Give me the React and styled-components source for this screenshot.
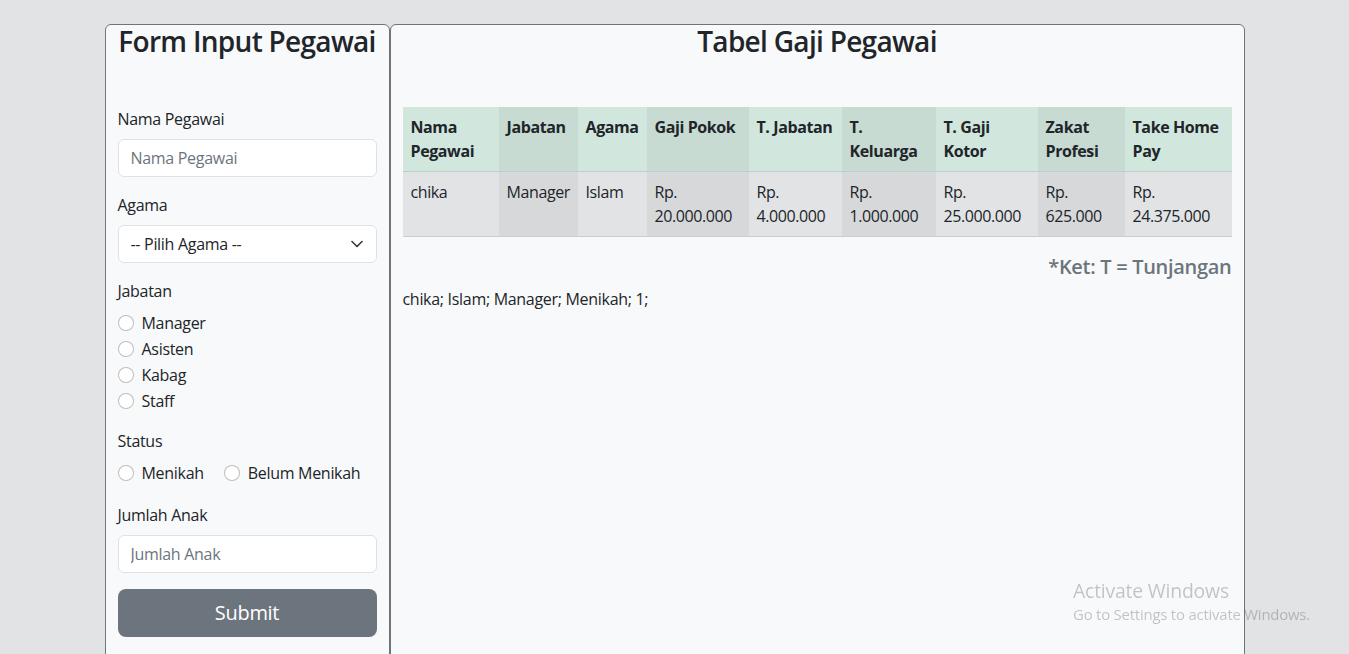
import React from 'react';
import styled, {createGlobalStyle} from 'styled-components';

const GlobalStyle = createGlobalStyle`
  html, body {
    margin: 0;
    overflow: hidden;
  }
  body {
    background-color: #e2e3e5;
    font-family: "Open Sans", "Noto Sans", sans-serif;
    font-size: 16px;
    line-height: 24px;
    color: #212529;
  }
  * {
    box-sizing: border-box;
  }
`

const Row = styled.div`
  display: flex;
  width: 1140px;
  margin: 24px auto 0;
`

const Card = styled.div`
  width: ${props => props.wide ? '855px' : '285px'};
  min-height: 680px;
  padding: 0 12px 30px;
  background-color: #f8f9fa;
  border: 1px solid #6c757d;
  border-radius: 6px;
`

const Title = styled.h3`
  margin: 0 0 48px;
  font-size: 28px;
  font-weight: 600;
  line-height: 33.6px;
  text-align: center;
  letter-spacing: -0.7px;
`

const Field = styled.div`
  margin-bottom: 16px;
`

const Label = styled.label`
  display: block;
  margin-bottom: 8px;
  letter-spacing: -0.3px;
`

const Input = styled.input`
  display: block;
  width: 100%;
  height: 38px;
  padding: 6px 12px;
  font-family: inherit;
  font-size: 16px;
  color: #212529;
  background-color: #fff;
  border: 1px solid #dee2e6;
  border-radius: 6px;
  letter-spacing: -0.3px;
  &::placeholder {
    color: #6c757d;
  }
`

const SelectWrap = styled.div`
  position: relative;
`

const Select = styled.select`
  appearance: none;
  display: block;
  width: 100%;
  height: 38px;
  padding: 6px 36px 6px 12px;
  font-family: inherit;
  font-size: 16px;
  color: #212529;
  background-color: #fff;
  border: 1px solid #dee2e6;
  border-radius: 6px;
  letter-spacing: -0.3px;
`

const Chevron = styled.svg`
  position: absolute;
  right: 14px;
  top: 15px;
  pointer-events: none;
`

const RadioList = styled.div`
  display: flex;
  flex-direction: ${props => props.inline ? 'row' : 'column'};
  gap: ${props => props.inline ? '20px' : '2px'};
  padding-bottom: ${props => props.inline ? '2px' : '0'};
`

const RadioItem = styled.label`
  display: flex;
  align-items: center;
  gap: 8px;
  height: 24px;
  letter-spacing: -0.3px;
`

const Radio = styled.input`
  appearance: none;
  width: 16px;
  height: 16px;
  margin: 0;
  background-color: #fff;
  border: 1px solid rgba(0, 0, 0, 0.25);
  border-radius: 50%;
`

const Button = styled.button`
  display: block;
  width: 100%;
  height: 48px;
  font-family: inherit;
  font-size: 20px;
  color: #fff;
  background-color: #6c757d;
  border: none;
  border-radius: 8px;
  letter-spacing: -0.3px;
`

const Table = styled.table`
  width: 100%;
  table-layout: fixed;
  border-collapse: collapse;
`

const Th = styled.th`
  padding: 8px;
  text-align: left;
  vertical-align: top;
  font-weight: 700;
  white-space: nowrap;
  letter-spacing: -0.4px;
  background-color: ${props => props.dark ? '#c7dbd2' : '#d1e7dd'};
  border-bottom: 1px solid #bcd0c7;
`

const Td = styled.td`
  padding: 8px;
  vertical-align: top;
  white-space: nowrap;
  letter-spacing: -0.4px;
  background-color: ${props => props.dark ? '#d7d8da' : '#e2e3e5'};
  border-bottom: 1px solid #cbccce;
`

const Note = styled.h5`
  margin: 18px 0 8px;
  font-size: 20px;
  font-weight: 600;
  line-height: 24px;
  color: #6c757d;
  text-align: right;
  letter-spacing: -0.3px;
`

const Summary = styled.p`
  margin: 0;
  letter-spacing: -0.3px;
`

const Watermark = styled.div`
  position: fixed;
  left: 1073px;
  top: 578px;
  color: rgba(0, 0, 0, 0.22);
  pointer-events: none;
  letter-spacing: -0.2px;
`

const WatermarkTitle = styled.div`
  font-size: 19.4px;
  line-height: 26px;
`

const WatermarkSub = styled.div`
  font-size: 14.9px;
  line-height: 20px;
`

const columns = [
  {w: 96, label: ['Nama', 'Pegawai']},
  {w: 79, label: ['Jabatan']},
  {w: 69, label: ['Agama']},
  {w: 102, label: ['Gaji Pokok']},
  {w: 93, label: ['T. Jabatan']},
  {w: 94, label: ['T.', 'Keluarga']},
  {w: 102, label: ['T. Gaji', 'Kotor']},
  {w: 87, label: ['Zakat', 'Profesi']},
  {w: 107, label: ['Take Home', 'Pay']},
];

const row = [
  ['chika'],
  ['Manager'],
  ['Islam'],
  ['Rp.', '20.000.000'],
  ['Rp.', '4.000.000'],
  ['Rp.', '1.000.000'],
  ['Rp.', '25.000.000'],
  ['Rp.', '625.000'],
  ['Rp.', '24.375.000'],
];

const lines = (parts) => parts.map((p, i) => (
  <React.Fragment key={i}>{i > 0 && <br />}{p}</React.Fragment>
));

function App() {
  return (
    <>
      <GlobalStyle />
      <Row>
        <Card>
          <Title>Form Input Pegawai</Title>
          <Field>
            <Label>Nama Pegawai</Label>
            <Input placeholder="Nama Pegawai" />
          </Field>
          <Field>
            <Label>Agama</Label>
            <SelectWrap>
              <Select defaultValue="">
                <option value="">-- Pilih Agama --</option>
              </Select>
              <Chevron width="12" height="8" viewBox="0 0 12 8">
                <path d="M1 1.5l5 5 5-5" fill="none" stroke="#343a40" strokeWidth="1.6" strokeLinecap="round" strokeLinejoin="round" />
              </Chevron>
            </SelectWrap>
          </Field>
          <Field>
            <Label>Jabatan</Label>
            <RadioList>
              {['Manager', 'Asisten', 'Kabag', 'Staff'].map(j => (
                <RadioItem key={j}><Radio type="radio" name="jabatan" />{j}</RadioItem>
              ))}
            </RadioList>
          </Field>
          <Field>
            <Label>Status</Label>
            <RadioList inline>
              {['Menikah', 'Belum Menikah'].map(s => (
                <RadioItem key={s}><Radio type="radio" name="status" />{s}</RadioItem>
              ))}
            </RadioList>
          </Field>
          <Field>
            <Label>Jumlah Anak</Label>
            <Input placeholder="Jumlah Anak" />
          </Field>
          <Button>Submit</Button>
        </Card>
        <Card wide>
          <Title>Tabel Gaji Pegawai</Title>
          <Table>
            <colgroup>
              {columns.map((c, i) => <col key={i} style={{width: c.w}} />)}
            </colgroup>
            <thead>
              <tr>
                {columns.map((c, i) => <Th key={i} dark={i % 2 === 1}>{lines(c.label)}</Th>)}
              </tr>
            </thead>
            <tbody>
              <tr>
                {row.map((c, i) => <Td key={i} dark={i % 2 === 1}>{lines(c)}</Td>)}
              </tr>
            </tbody>
          </Table>
          <Note>*Ket: T = Tunjangan</Note>
          <Summary>chika; Islam; Manager; Menikah; 1;</Summary>
        </Card>
      </Row>
      <Watermark>
        <WatermarkTitle>Activate Windows</WatermarkTitle>
        <WatermarkSub>Go to Settings to activate Windows.</WatermarkSub>
      </Watermark>
    </>
  );
}

export default App;
